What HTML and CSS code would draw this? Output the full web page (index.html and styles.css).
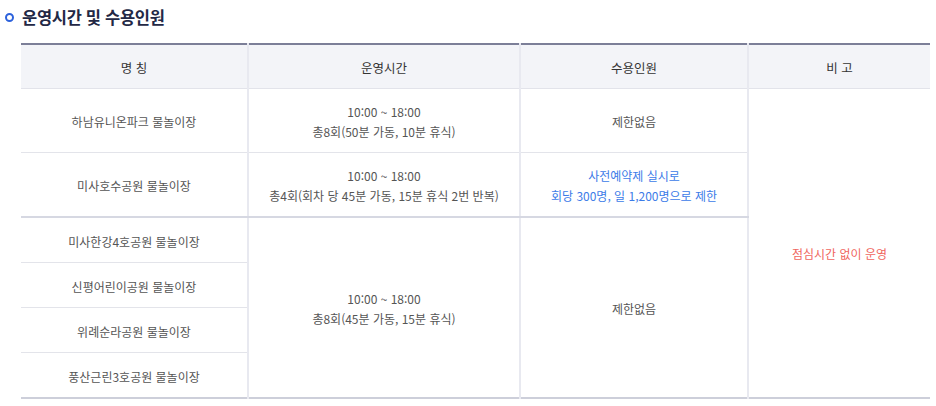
FILE: index.html
```html
<!DOCTYPE html>
<html lang="ko">
<head>
<meta charset="utf-8">
<link rel="stylesheet" href="styles.css">
</head>
<body>
<h3 class="title"><span class="bullet"></span>운영시간 및 수용인원</h3>
<div class="table-wrap">
<table class="info">
  <colgroup>
    <col class="c1"><col class="c2"><col class="c3"><col class="c4">
  </colgroup>
  <thead>
    <tr><th>명 칭</th><th>운영시간</th><th>수용인원</th><th class="last">비 고</th></tr>
  </thead>
  <tbody>
    <tr class="r-tall">
      <td>하남유니온파크 물놀이장</td>
      <td>10:00 ~ 18:00<br>총8회(50분 가동, 10분 휴식)</td>
      <td>제한없음</td>
      <td rowspan="6" class="last note">점심시간 없이 운영</td>
    </tr>
    <tr class="r-tall r-sep">
      <td>미사호수공원 물놀이장</td>
      <td>10:00 ~ 18:00<br>총4회(회차 당 45분 가동, 15분 휴식 2번 반복)</td>
      <td class="blue">사전예약제 실시로<br>회당 300명, 일 1,200명으로 제한</td>
    </tr>
    <tr class="r-short">
      <td>미사한강4호공원 물놀이장</td>
      <td rowspan="4">10:00 ~ 18:00<br>총8회(45분 가동, 15분 휴식)</td>
      <td rowspan="4">제한없음</td>
    </tr>
    <tr class="r-short"><td>신평어린이공원 물놀이장</td></tr>
    <tr class="r-short"><td>위례순라공원 물놀이장</td></tr>
    <tr class="r-short r-end"><td>풍산근린3호공원 물놀이장</td></tr>
  </tbody>
</table>
</div>
</body>
</html>
```
FILE: styles.css
```css
html, body {
  margin: 0;
  padding: 0;
  background: #ffffff;
}
body {
  font-family: "Noto Sans CJK KR", "Noto Sans", sans-serif;
  color: #555;
}
.title {
  margin: 0;
  padding: 4px 0 0 5px;
  box-sizing: border-box;
  display: flex;
  align-items: center;
  font-size: 16.5px;
  font-weight: 700;
  color: #232845;
  line-height: 24px;
  height: 29px;
  letter-spacing: -0.3px;
}
.bullet {
  width: 5px;
  height: 5px;
  border: 2px solid #2d62dc;
  border-radius: 50%;
  margin-right: 8px;
  margin-top: 1px;
}
.table-wrap {
  padding: 14px 6px 0 21px;
}
.info {
  width: 909px;
  border-collapse: collapse;
  table-layout: fixed;
  font-size: 12px;
  border-top: 2px solid #7c7f98;
  border-bottom: 2px solid #cdcfda;
}
.c1 { width: 227px; }
.c2 { width: 272px; }
.c3 { width: 228px; }
.c4 { width: 182px; }
.info th {
  height: 42px;
  background: #f3f4f8;
  font-weight: 400;
  color: #333;
  font-size: 12.5px;
  border-bottom: 1px solid #e2e3ea;
  border-right: 2px solid #e8e9f0;
  padding: 1px 0 0;
}
.info td {
  text-align: center;
  vertical-align: middle;
  padding: 3px 0 0;
  line-height: 20px;
  color: #555;
  border-bottom: 1px solid #e3e4ea;
  border-right: 2px solid #e8e9f0;
}
.info th.last, .info td.last {
  border-right: none;
  border-left: 1px solid #e3e4ea;
}
.r-tall td { height: 60px; }
.r-short td { height: 41px; }
.r-sep td { border-bottom: 2px solid #d6d8e2; }
.r-end td { border-bottom: none; }
.info td.blue { color: #3c7be8; }
.info td.note {
  color: #f0665e;
  padding-top: 22px;
  border-bottom: none;
}
```
